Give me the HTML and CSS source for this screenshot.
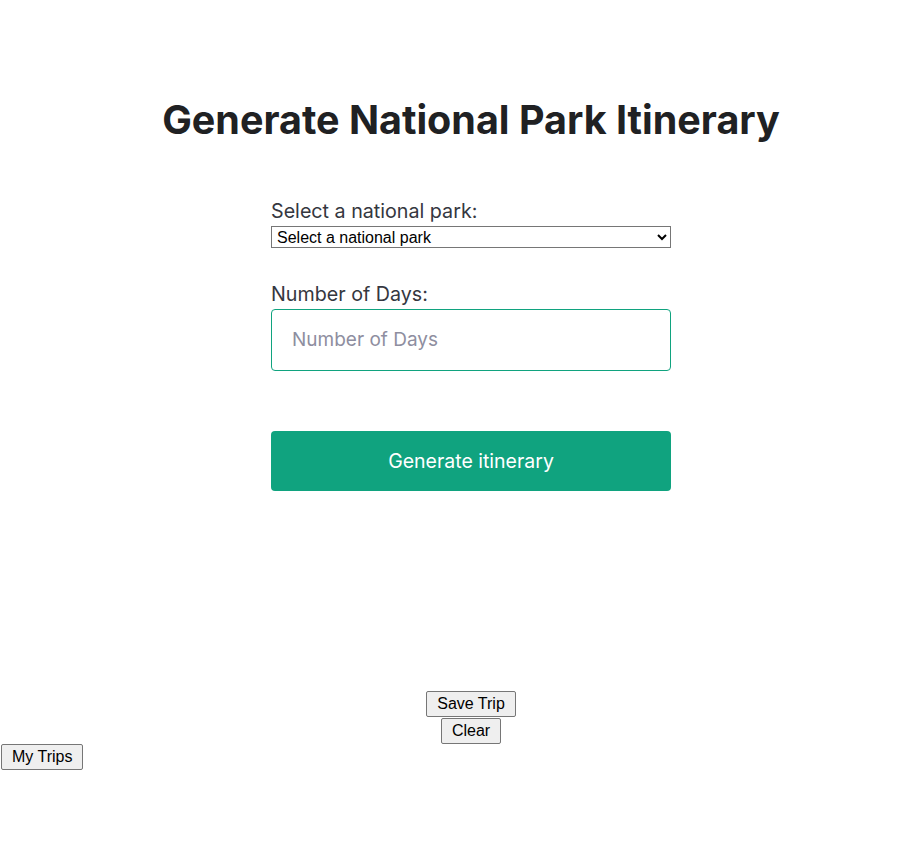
FILE: index.html
```html
<!DOCTYPE html>
<html>
<head>
<meta charset="utf-8">
<link rel="stylesheet" href="styles.css">
</head>
<body>
<main class="main">
  <h3 class="title">Generate National Park Itinerary</h3>
  <form class="form">
    <label class="label" for="park">Select a national park:</label>
    <select id="park" class="select">
      <option>Select a national park</option>
    </select>
    <label class="label label-days" for="days">Number of Days:</label>
    <input id="days" class="input" type="number" placeholder="Number of Days">
    <button type="button" class="submit">Generate itinerary</button>
  </form>
  <div class="actions">
    <button type="button" class="btn">Save Trip</button>
    <button type="button" class="btn">Clear</button>
  </div>
</main>
<div class="footer">
  <button type="button" class="btn">My Trips</button>
</div>
</body>
</html>
```

FILE: styles.css
```css
html, body {
  margin: 0;
  padding: 0;
  background: #fff;
}
body {
  font-family: Inter, "Noto Sans", sans-serif;
  color: #353740;
}
.main {
  display: flex;
  flex-direction: column;
  align-items: center;
  padding-top: 96px;
  padding-left: 27px;
}
.title {
  font-size: 39.5px;
  line-height: 48px;
  font-weight: 700;
  color: #202123;
  margin: 0 0 52px;
}
.form {
  display: flex;
  flex-direction: column;
  width: 400px;
}
.label {
  font-size: 19.7px;
  line-height: 30px;
  color: #353740;
}
.label-days {
  margin-top: 31px;
}
.select {
  font-family: Arial, "Liberation Sans", sans-serif;
  font-size: 16px;
  height: 22px;
  margin: 0;
  padding-left: 1px;
  border: 1px solid #767676;
  border-radius: 0;
  background: #fff;
  color: #000;
}
.input {
  font-family: Inter, "Noto Sans", sans-serif;
  font-size: 19px;
  line-height: 28px;
  padding: 16px 20px;
  border: 1px solid #10a37f;
  border-radius: 4px;
  margin: 0 0 60px;
  outline: none;
}
.input::placeholder {
  color: #8e8ea0;
  opacity: 1;
}
.submit {
  font-family: Inter, "Noto Sans", sans-serif;
  font-size: 19.5px;
  line-height: 28px;
  padding: 16px 0;
  color: #fff;
  background: #10a37f;
  border: none;
  border-radius: 4px;
  text-align: center;
}
.actions {
  display: flex;
  flex-direction: column;
  align-items: center;
  gap: 1px;
  margin-top: 200px;
}
.btn {
  font-family: Arial, "Liberation Sans", sans-serif;
  font-size: 16px;
  padding: 1px 10px;
  height: 26px;
  color: #000;
  background: #efefef;
  border: 1px solid #767676;
  border-radius: 2px;
}
.footer {
  padding-left: 1px;
}
```
